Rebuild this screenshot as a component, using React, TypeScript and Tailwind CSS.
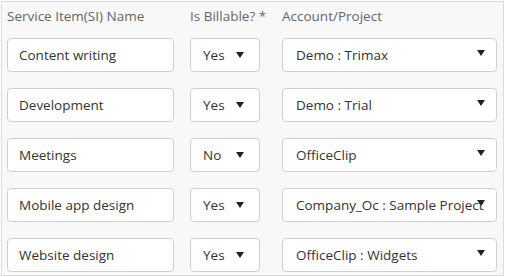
const rows = [
  { name: 'Content writing', billable: 'Yes', account: 'Demo : Trimax' },
  { name: 'Development', billable: 'Yes', account: 'Demo : Trial' },
  { name: 'Meetings', billable: 'No', account: 'OfficeClip' },
  { name: 'Mobile app design', billable: 'Yes', account: 'Company_Oc : Sample Project' },
  { name: 'Website design', billable: 'Yes', account: 'OfficeClip : Widgets' },
];

function Caret({ className }: { className?: string }) {
  return (
    <svg width="8" height="6" viewBox="0 0 8 6" className={className}>
      <path d="M0 0 L8 0 L4 6 Z" fill="#222" />
    </svg>
  );
}

export default function App() {
  return (
    <div className="w-[506px] h-[277px] bg-white p-px font-['Open_Sans',sans-serif]">
      <div className="h-[275px] w-[503px] border border-[#dcdcdc] bg-[#f8f8f8] pl-[5px] pt-[3px]">
        <div className="flex h-[22px] items-center text-[13.5px] text-[#666]">
          <div className="w-[183px]">Service Item(SI) Name</div>
          <div className="w-[92px]">Is Billable? *</div>
          <div>Account/Project</div>
        </div>
        <div className="mt-[11px] flex flex-col gap-[16px]">
          {rows.map((r) => (
            <div key={r.name} className="flex h-[34px] text-[13.5px] text-[#333]">
              <div className="flex w-[167px] items-center rounded border border-[#cfcfcf] bg-white pl-[11px]">
                {r.name}
              </div>
              <div className="ml-[16px] flex w-[70px] items-center rounded border border-[#cfcfcf] bg-white pl-[12px]">
                <span className="w-[33px]">{r.billable}</span>
                <Caret />
              </div>
              <div className="relative ml-[22px] flex w-[215px] items-center whitespace-nowrap rounded border border-[#cfcfcf] bg-white pl-[13px]">
                {r.account}
                <Caret className="absolute right-[11px] top-[11px]" />
              </div>
            </div>
          ))}
        </div>
      </div>
    </div>
  );
}
